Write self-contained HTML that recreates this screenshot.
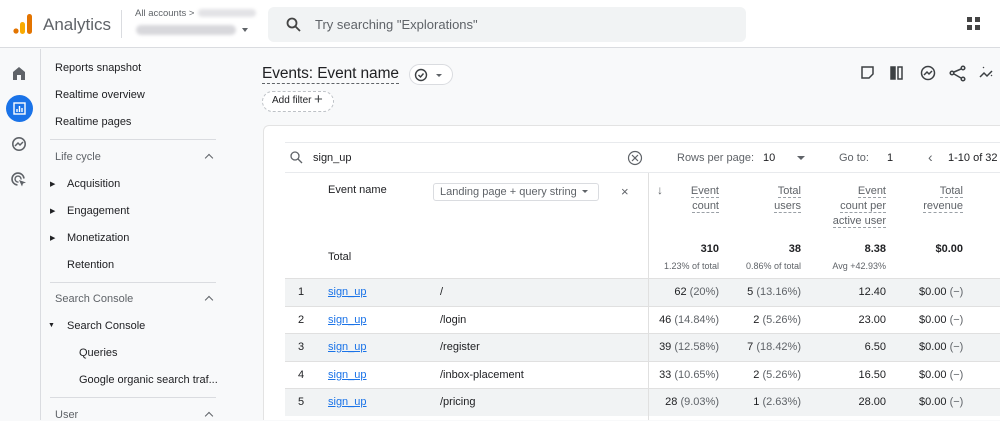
<!DOCTYPE html>
<html><head><style>
*{box-sizing:border-box;margin:0;padding:0}
body{width:1000px;height:420px;overflow:hidden;background:#f8f9fa;font-family:"Liberation Sans",Arial,sans-serif;color:#202124;position:relative}
.a{position:absolute}
.hdr{left:0;top:0;width:1000px;height:48px;background:#fff;border-bottom:1px solid #dadce0}
.rail{left:0;top:49px;width:41px;height:371px;background:#f8f9fa;border-right:1px solid #dadce0}
.nav{left:41px;top:49px;width:221px;height:371px;background:#f8f9fa}
.nav div{position:absolute;font-size:11px;white-space:nowrap}
.sec{color:#5f6368}
.hr{height:1px;background:#dadce0;width:166px;left:10px}
.card{left:263px;top:125px;width:737px;height:295px;background:#fff;border:1px solid #e3e3e3;border-right:none;border-bottom:none;border-radius:6px 0 0 0}
.t{position:absolute;font-size:11px;white-space:nowrap}
.r{text-align:right}
.row{position:absolute;left:285px;width:715px;height:28px;border-top:1px solid #e0e0e0}
.g{color:#5f6368}
.lnk{color:#1a73e8;text-decoration:underline}
.dash{border-bottom:1px dashed #9aa0a6}
.chev{width:6px;height:6px;border-left:1.3px solid #5f6368;border-top:1.3px solid #5f6368;transform:rotate(45deg)}
</style></head><body>
<div class="a hdr"></div>
<svg class="a" style="left:12px;top:13px" width="22" height="22"><circle cx="4" cy="18" r="2.6" fill="#e37400"/><rect x="8" y="9" width="5" height="12" rx="2.5" fill="#f9ab00"/><rect x="15" y="1" width="5" height="20" rx="2.5" fill="#e37400"/></svg>
<div class="a" style="left:43px;top:15px;font-size:17px;color:#5f6368">Analytics</div>
<div class="a" style="left:121px;top:10px;width:1px;height:28px;background:#dadce0"></div>
<div class="a" style="left:135px;top:8px;font-size:9.5px;color:#5f6368">All accounts &gt;</div>
<div class="a" style="left:198px;top:9px;width:58px;height:8px;background:#e3e3e6;border-radius:4px;filter:blur(1.5px)"></div>
<div class="a" style="left:136px;top:25px;width:100px;height:10px;background:#d8d8dc;border-radius:5px;filter:blur(1.5px)"></div>
<div class="a" style="left:242px;top:28px;border:3.5px solid transparent;border-top:4px solid #5f6368"></div>
<div class="a" style="left:268px;top:7px;width:478px;height:35px;background:#f1f3f4;border-radius:6px"></div>
<svg class="a" style="left:286px;top:17px" width="15" height="15"><circle cx="6" cy="6" r="4.5" fill="none" stroke="#444" stroke-width="1.8"/><path d="M9.5 9.5L14 14" stroke="#444" stroke-width="1.8"/></svg>
<div class="a" style="left:315px;top:17px;font-size:13px;color:#5f6368">Try searching "Explorations"</div>
<svg class="a" style="left:967px;top:17px" width="14" height="14" fill="#444"><rect x="0" y="0" width="5" height="5"/><rect x="8" y="0" width="5" height="5"/><rect x="0" y="8" width="5" height="5"/><rect x="8" y="8" width="5" height="5"/></svg>

<div class="a rail"></div>
<svg class="a" style="left:11px;top:65px" width="16" height="16"><path d="M2 7L8 2l6 5v8H10v-5H6v5H2z" fill="#5f6368"/></svg>
<div class="a" style="left:6px;top:95px;width:27px;height:27px;border-radius:50%;background:#1a73e8"></div>
<svg class="a" style="left:13px;top:102px" width="13" height="13"><rect x="1" y="1" width="11" height="11" fill="none" stroke="#fff" stroke-width="1.4"/><path d="M4 10V7M6.5 10V4M9 10V6" stroke="#fff" stroke-width="1.4"/></svg>
<svg class="a" style="left:11px;top:136px" width="16" height="16"><circle cx="8" cy="8" r="6.2" fill="none" stroke="#5f6368" stroke-width="1.6"/><path d="M4 10l3-3 2 2 3-3" fill="none" stroke="#5f6368" stroke-width="1.5"/></svg>
<svg class="a" style="left:11px;top:172px" width="16" height="16"><path d="M13 6.5A6 6 0 1 0 6.5 13" fill="none" stroke="#5f6368" stroke-width="1.6"/><path d="M10 7.5A3 3 0 1 0 7.5 10" fill="none" stroke="#5f6368" stroke-width="1.4"/><path d="M8 8l7 2.5-3 1-1 3z" fill="#5f6368"/></svg>

<div class="a nav">
<div style="left:14px;top:13px">Reports snapshot</div>
<div style="left:14px;top:40px">Realtime overview</div>
<div style="left:14px;top:67px">Realtime pages</div>
<div class="hr" style="top:90px;left:9px"></div>
<div class="sec" style="left:14px;top:102px">Life cycle</div><div class="chev" style="left:165px;top:106px"></div>
<div style="left:9px;top:131px;font-size:7px">▶</div><div style="left:26px;top:129px">Acquisition</div>
<div style="left:9px;top:158px;font-size:7px">▶</div><div style="left:26px;top:156px">Engagement</div>
<div style="left:9px;top:185px;font-size:7px">▶</div><div style="left:26px;top:183px">Monetization</div>
<div style="left:26px;top:210px">Retention</div>
<div class="hr" style="top:233px;left:9px"></div>
<div class="sec" style="left:14px;top:244px">Search Console</div><div class="chev" style="left:165px;top:248px"></div>
<div style="left:7px;top:273px;font-size:7px">▼</div><div style="left:26px;top:271px">Search Console</div>
<div style="left:38px;top:298px">Queries</div>
<div style="left:38px;top:325px">Google organic search traf...</div>
<div class="hr" style="top:348px;left:9px"></div>
<div class="sec" style="left:14px;top:360px">User</div><div class="chev" style="left:165px;top:364px"></div>
</div>

<div class="a" style="left:262px;top:64px;font-size:15.5px;border-bottom:1px dashed #5f6368;line-height:19px;letter-spacing:-0.1px">Events: Event name</div>
<div class="a" style="left:409px;top:64px;width:44px;height:21px;border:1px solid #dadce0;border-radius:11px;background:#fff"></div>
<svg class="a" style="left:414px;top:68px" width="14" height="14"><circle cx="7" cy="7" r="5.5" fill="none" stroke="#3c4043" stroke-width="1.4"/><path d="M4.5 7l2 2 3-3.5" fill="none" stroke="#3c4043" stroke-width="1.4"/></svg>
<div class="a" style="left:436px;top:74px;border:3px solid transparent;border-top:3.5px solid #5f6368"></div>
<div class="a" style="left:262px;top:91px;width:72px;height:21px;border:1px dashed #bdc1c6;border-radius:11px;background:#fff"></div>
<div class="a" style="left:272px;top:95px;font-size:10px">Add filter</div>
<div class="a" style="left:314px;top:91px;font-size:15px;color:#3c4043">+</div>
<svg class="a" style="left:860px;top:64px" width="140" height="18" fill="none" stroke="#3c4043" stroke-width="1.5">
<path d="M2 3h11v7l-4 4H2z"/><rect x="31" y="3" width="4" height="12" fill="#3c4043"/><rect x="38" y="3" width="4" height="12"/>
<circle cx="68" cy="9" r="6.5"/><path d="M64 11l3-3 2 2 3-3"/>
<circle cx="103" cy="4" r="1.8"/><circle cx="92" cy="9" r="1.8"/><circle cx="103" cy="15" r="1.8"/><path d="M94 8l7-3M94 10l7 4"/>
<path d="M120 13l4-4 3 3 5-5"/><path d="M123 4l1-1M131 11l1 1" stroke-width="1.2"/></svg>

<div class="a card"></div>
<div class="a" style="left:285px;top:142px;width:715px;height:1px;background:#e8eaed"></div>
<svg class="a" style="left:290px;top:151px" width="13" height="13"><circle cx="5" cy="5" r="4" fill="none" stroke="#5f6368" stroke-width="1.3"/><path d="M8 8l4 4" stroke="#5f6368" stroke-width="1.3"/></svg>
<div class="t" style="left:313px;top:152px">sign_up</div>
<svg class="a" style="left:627px;top:150px" width="16" height="16"><circle cx="8" cy="8" r="6.5" fill="none" stroke="#5f6368" stroke-width="1.2"/><path d="M5 5l6 6M11 5l-6 6" stroke="#5f6368" stroke-width="1.2"/></svg>
<div class="t g" style="left:677px;top:152px">Rows per page:</div>
<div class="t" style="left:763px;top:152px">10</div>
<div class="a" style="left:797px;top:156px;border:4px solid transparent;border-top:4px solid #5f6368"></div>
<div class="t g" style="left:839px;top:152px">Go to:</div>
<div class="t" style="left:887px;top:152px">1</div>
<div class="t g" style="left:928px;top:149px;font-size:14px">‹</div>
<div class="t" style="left:948px;top:152px">1-10 of 32</div>
<div class="a" style="left:285px;top:172px;width:715px;height:1px;background:#e8eaed"></div>
<div class="a" style="left:648px;top:173px;width:1px;height:247px;background:#e0e0e0"></div>
<div class="t" style="left:328px;top:184px">Event name</div>
<div class="a" style="left:433px;top:183px;width:166px;height:18px;border:1px solid #dadce0;border-radius:3px"></div>
<div class="t g" style="left:440px;top:186px">Landing page + query string</div>
<div class="a" style="left:582px;top:190px;border:3px solid transparent;border-top:3.5px solid #5f6368"></div>
<div class="t g" style="left:621px;top:184px;font-size:13px">×</div>
<div class="t g" style="left:657px;top:183px;font-size:12px">↓</div>
<div class="t r g" style="left:650px;width:69px;top:184px;line-height:15px"><span class="dash">Event</span><br><span class="dash">count</span></div>
<div class="t r g" style="left:730px;width:71px;top:184px;line-height:15px"><span class="dash">Total</span><br><span class="dash">users</span></div>
<div class="t r g" style="left:810px;width:76px;top:184px;line-height:15px"><span class="dash">Event</span><br><span class="dash">count per</span><br><span class="dash">active user</span></div>
<div class="t r g" style="left:890px;width:73px;top:184px;line-height:15px"><span class="dash">Total</span><br><span class="dash">revenue</span></div>
<div class="t" style="left:328px;top:251px">Total</div>
<div class="t r" style="left:650px;width:69px;top:243px;font-weight:bold">310</div>
<div class="t r g" style="left:640px;width:79px;top:261px;font-size:9px">1.23% of total</div>
<div class="t r" style="left:730px;width:71px;top:243px;font-weight:bold">38</div>
<div class="t r g" style="left:720px;width:81px;top:261px;font-size:9px">0.86% of total</div>
<div class="t r" style="left:810px;width:76px;top:243px;font-weight:bold">8.38</div>
<div class="t r g" style="left:800px;width:86px;top:261px;font-size:9px">Avg +42.93%</div>
<div class="t r" style="left:890px;width:73px;top:243px;font-weight:bold">$0.00</div>

<div class="row" style="top:278px;background:#f1f3f4"></div>
<div class="row" style="top:306px"></div>
<div class="row" style="top:333px;background:#f1f3f4"></div>
<div class="row" style="top:361px"></div>
<div class="row" style="top:388px;background:#f1f3f4"></div>
<div class="a" style="left:648px;top:278px;width:1px;height:142px;background:#e0e0e0"></div>

<div class="t" style="left:298px;top:286px">1</div><div class="t lnk" style="left:328px;top:286px">sign_up</div><div class="t" style="left:440px;top:286px">/</div>
<div class="t r" style="left:640px;width:79px;top:286px">62 <span class="g">(20%)</span></div><div class="t r" style="left:720px;width:81px;top:286px">5 <span class="g">(13.16%)</span></div><div class="t r" style="left:810px;width:76px;top:286px">12.40</div><div class="t" style="left:919px;top:286px">$0.00 <span class="g">(−)</span></div>
<div class="t" style="left:298px;top:314px">2</div><div class="t lnk" style="left:328px;top:314px">sign_up</div><div class="t" style="left:440px;top:314px">/login</div>
<div class="t r" style="left:640px;width:79px;top:314px">46 <span class="g">(14.84%)</span></div><div class="t r" style="left:720px;width:81px;top:314px">2 <span class="g">(5.26%)</span></div><div class="t r" style="left:810px;width:76px;top:314px">23.00</div><div class="t" style="left:919px;top:314px">$0.00 <span class="g">(−)</span></div>
<div class="t" style="left:298px;top:341px">3</div><div class="t lnk" style="left:328px;top:341px">sign_up</div><div class="t" style="left:440px;top:341px">/register</div>
<div class="t r" style="left:640px;width:79px;top:341px">39 <span class="g">(12.58%)</span></div><div class="t r" style="left:720px;width:81px;top:341px">7 <span class="g">(18.42%)</span></div><div class="t r" style="left:810px;width:76px;top:341px">6.50</div><div class="t" style="left:919px;top:341px">$0.00 <span class="g">(−)</span></div>
<div class="t" style="left:298px;top:369px">4</div><div class="t lnk" style="left:328px;top:369px">sign_up</div><div class="t" style="left:440px;top:369px">/inbox-placement</div>
<div class="t r" style="left:640px;width:79px;top:369px">33 <span class="g">(10.65%)</span></div><div class="t r" style="left:720px;width:81px;top:369px">2 <span class="g">(5.26%)</span></div><div class="t r" style="left:810px;width:76px;top:369px">16.50</div><div class="t" style="left:919px;top:369px">$0.00 <span class="g">(−)</span></div>
<div class="t" style="left:298px;top:396px">5</div><div class="t lnk" style="left:328px;top:396px">sign_up</div><div class="t" style="left:440px;top:396px">/pricing</div>
<div class="t r" style="left:640px;width:79px;top:396px">28 <span class="g">(9.03%)</span></div><div class="t r" style="left:720px;width:81px;top:396px">1 <span class="g">(2.63%)</span></div><div class="t r" style="left:810px;width:76px;top:396px">28.00</div><div class="t" style="left:919px;top:396px">$0.00 <span class="g">(−)</span></div>
</body></html>
